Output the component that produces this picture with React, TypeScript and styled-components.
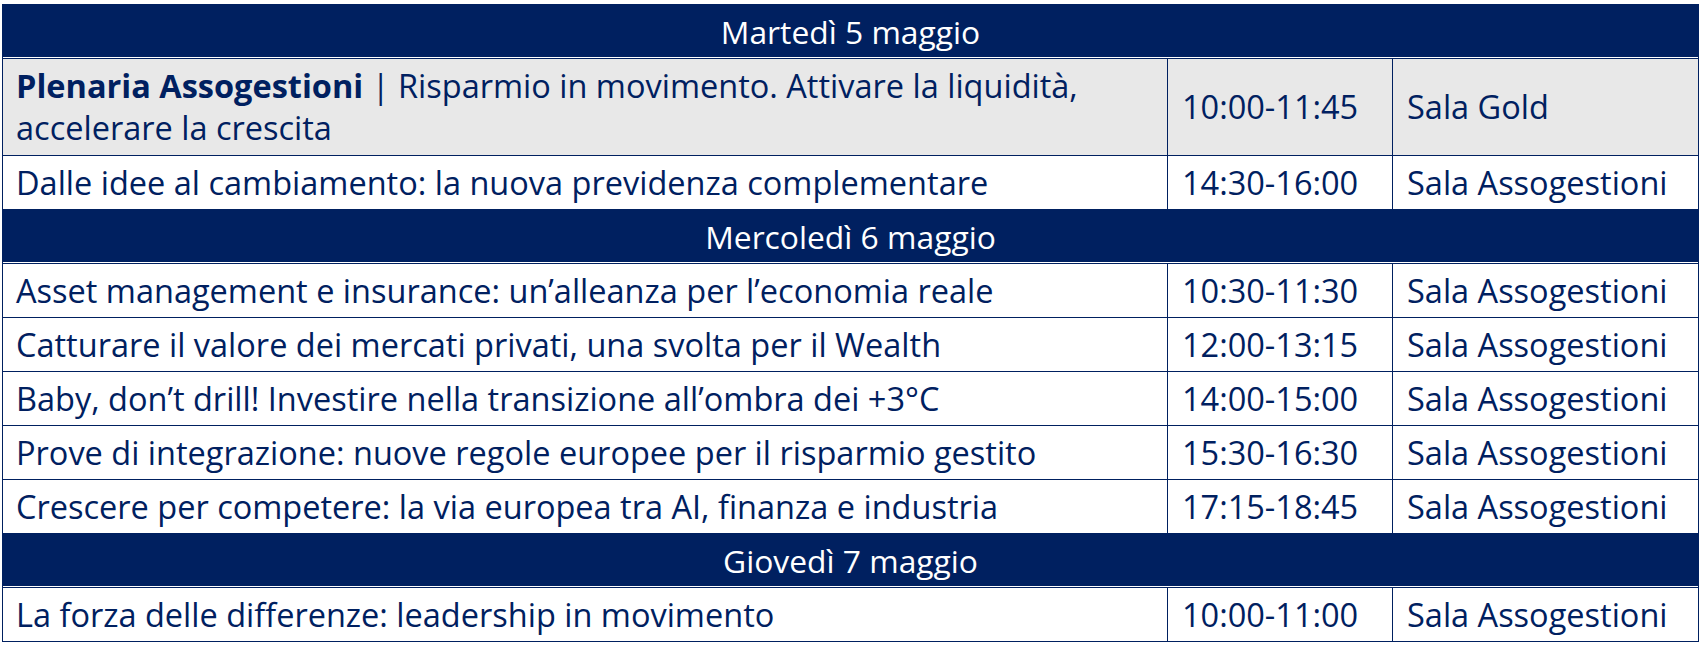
import React from "react";
import styled, { createGlobalStyle } from "styled-components";

const NAVY = "#002060";

const Global = createGlobalStyle`
  html, body { margin: 0; padding: 0; background: #ffffff; }
  body { font-family: "Open Sans", "Liberation Sans", Arial, sans-serif; }
`;

const Page = styled.div`
  padding: 4px 2px 0 2px;
`;

const Table = styled.table`
  width: 1696px;
  table-layout: fixed;
  border-collapse: collapse;
  font-family: "Open Sans", "Liberation Sans", Arial, sans-serif;
  font-size: 32.5px;
  color: ${NAVY};
`;

const DayCell = styled.th`
  background: ${NAVY};
  color: #ffffff;
  font-weight: 400;
  font-size: 31.8px;
  text-align: center;
  height: 53px;
  padding: 0;
  line-height: 40px;
  border: 1px solid ${NAVY};
  box-shadow: inset 0 -1px 0 #ffffff;
`;

const Cell = styled.td<{ $shaded?: boolean; $tall?: boolean }>`
  background: ${(p) => (p.$shaded ? "#e8e8e8" : "#ffffff")};
  border: 1px solid ${NAVY};
  padding: ${(p) => (p.$tall ? "6px 14px" : "0 14px")};
  height: ${(p) => (p.$tall ? "84px" : "53px")};
  line-height: 42px;
  vertical-align: middle;
  white-space: nowrap;
  box-sizing: content-box;
`;

const TitleCell = styled(Cell)`
  white-space: normal;
  padding-left: 13px;
`;

const Strong = styled.strong`
  font-weight: 700;
`;

type Session = { title: React.ReactNode; time: string; room: string; shaded?: boolean };
type Day = { day: string; sessions: Session[] };

const days: Day[] = [
  {
    day: "Martedì 5 maggio",
    sessions: [
      {
        title: (
          <>
            <Strong>Plenaria Assogestioni</Strong> | Risparmio in movimento. Attivare la liquidità,
            <br />
            accelerare la crescita
          </>
        ),
        time: "10:00-11:45",
        room: "Sala Gold",
        shaded: true,
      },
      {
        title: "Dalle idee al cambiamento: la nuova previdenza complementare",
        time: "14:30-16:00",
        room: "Sala Assogestioni",
      },
    ],
  },
  {
    day: "Mercoledì 6 maggio",
    sessions: [
      { title: "Asset management e insurance: un’alleanza per l’economia reale", time: "10:30-11:30", room: "Sala Assogestioni" },
      { title: "Catturare il valore dei mercati privati, una svolta per il Wealth", time: "12:00-13:15", room: "Sala Assogestioni" },
      { title: "Baby, don’t drill! Investire nella transizione all’ombra dei +3°C", time: "14:00-15:00", room: "Sala Assogestioni" },
      { title: "Prove di integrazione: nuove regole europee per il risparmio gestito", time: "15:30-16:30", room: "Sala Assogestioni" },
      { title: "Crescere per competere: la via europea tra AI, finanza e industria", time: "17:15-18:45", room: "Sala Assogestioni" },
    ],
  },
  {
    day: "Giovedì 7 maggio",
    sessions: [
      { title: "La forza delle differenze: leadership in movimento", time: "10:00-11:00", room: "Sala Assogestioni" },
    ],
  },
];

export default function App() {
  return (
    <Page>
      <Global />
      <Table>
        <colgroup>
          <col style={{ width: 1165 }} />
          <col style={{ width: 225 }} />
          <col style={{ width: 306 }} />
        </colgroup>
        <tbody>
          {days.map((d) => (
            <React.Fragment key={d.day}>
              <tr>
                <DayCell colSpan={3}>{d.day}</DayCell>
              </tr>
              {d.sessions.map((s, i) => (
                <tr key={i}>
                  <TitleCell $shaded={s.shaded} $tall={s.shaded}>{s.title}</TitleCell>
                  <Cell $shaded={s.shaded} $tall={s.shaded}>{s.time}</Cell>
                  <Cell $shaded={s.shaded} $tall={s.shaded}>{s.room}</Cell>
                </tr>
              ))}
            </React.Fragment>
          ))}
        </tbody>
      </Table>
    </Page>
  );
}
